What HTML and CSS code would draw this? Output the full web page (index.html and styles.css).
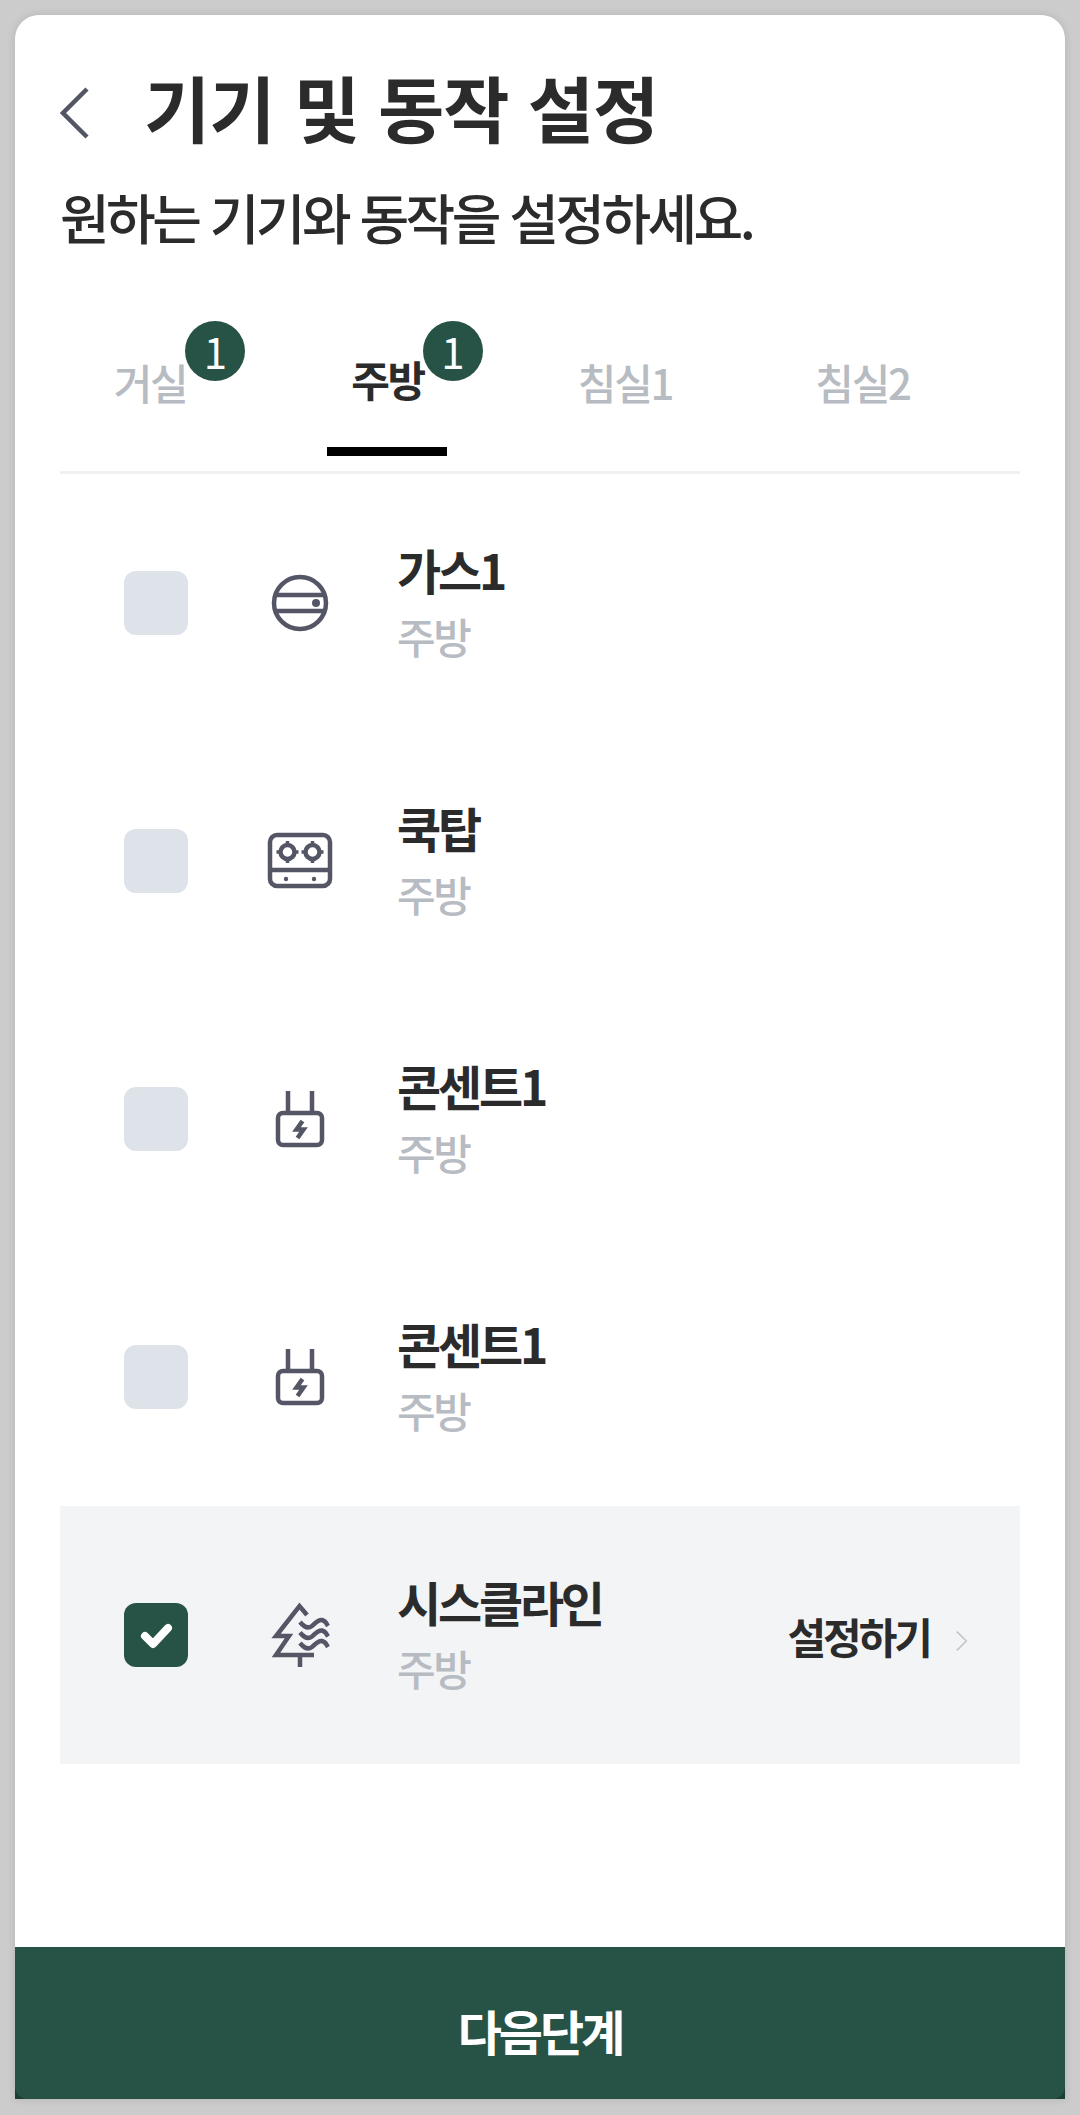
FILE: index.html
```html
<!DOCTYPE html>
<html lang="ko">
<head>
<meta charset="utf-8">
<title>기기 및 동작 설정</title>
<link rel="stylesheet" href="styles.css">
</head>
<body>
<main class="card">
  <header class="head">
    <div class="title-row">
      <svg class="back" viewBox="0 0 30 52"><path d="M27 2 3 26l24 24"/></svg>
      <h1 class="title">기기 및 동작 설정</h1>
    </div>
    <p class="subtitle">원하는 기기와 동작을 설정하세요.</p>
  </header>
  <nav class="tabs">
    <div class="tab"><span class="tab-label">거실<span class="badge">1</span></span></div>
    <div class="tab active"><span class="tab-label">주방<span class="badge">1</span></span></div>
    <div class="tab"><span class="tab-label">침실1</span></div>
    <div class="tab"><span class="tab-label">침실2</span></div>
  </nav>
  <section class="list">
    <div class="row">
      <span class="check"></span>
      <svg class="icon" viewBox="0 0 72 72"><circle cx="36" cy="36" r="26"/><path d="M11 28h50M11 44h50"/><circle class="fill" cx="52" cy="36" r="4"/></svg>
      <div class="info"><div class="name">가스1</div><div class="place">주방</div></div>
    </div>
    <div class="row">
      <span class="check"></span>
      <svg class="icon" viewBox="0 0 72 72"><rect x="6" y="10" width="60" height="51" rx="7"/><path d="M6 45h60"/><circle cx="23.500" cy="27" r="7"/><circle cx="48.500" cy="27" r="7"/><path d="M23.500 16v4M23.500 34v4M12.500 27h4M30.500 27h4M48.500 16v4M48.500 34v4M37.500 27h4M55.500 27h4" class="thin"/><circle class="fill" cx="22" cy="54" r="2.200"/><circle class="fill" cx="50" cy="54" r="2.200"/></svg>
      <div class="info"><div class="name">쿡탑</div><div class="place">주방</div></div>
    </div>
    <div class="row">
      <span class="check"></span>
      <svg class="icon" viewBox="0 0 72 72"><path d="M24 8v22M48 8v22"/><rect x="14" y="30" width="44" height="32" rx="5"/><path class="bolt" d="M38.500 38 32.500 46.500h7L33.500 55"/></svg>
      <div class="info"><div class="name">콘센트1</div><div class="place">주방</div></div>
    </div>
    <div class="row">
      <span class="check"></span>
      <svg class="icon" viewBox="0 0 72 72"><path d="M24 8v22M48 8v22"/><rect x="14" y="30" width="44" height="32" rx="5"/><path class="bolt" d="M38.500 38 32.500 46.500h7L33.500 55"/></svg>
      <div class="info"><div class="name">콘센트1</div><div class="place">주방</div></div>
    </div>
    <div class="row selected">
      <span class="check on"><svg class="tick" viewBox="0 0 64 64"><path d="M21 33l8 8 15-16"/></svg></span>
      <svg class="icon" viewBox="0 0 72 72"><path d="M43 16 35.500 7 12 37h13L12 56h38M36 56v12"/><path d="M36 23c4 5 8 7 12 4s6-7 10-6 4 3 6 6M36 33.500c4 5 8 7 12 4s6-7 10-6 4 3 6 6M36 44c4 5 8 7 12 4s6-7 10-6 4 3 6 6"/></svg>
      <div class="info"><div class="name">시스클라인</div><div class="place">주방</div></div>
      <div class="action"><span>설정하기</span><svg class="chev" viewBox="0 0 14 24"><path d="M1 1l11 11L1 23"/></svg></div>
    </div>
  </section>
  <button class="next">다음단계</button>
</main>
</body>
</html>
```
FILE: styles.css
```css
* { box-sizing: border-box; }
html, body { margin: 0; height: 100%; }
body {
  background: #cccccc;
  padding: 15px;
  font-family: "Noto Sans CJK KR", "Noto Sans", sans-serif;
  color: #2b2b2b;
}
.card {
  height: 2084px;
  background: #fff;
  border-radius: 24px 24px 0 0;
  box-shadow: 0 0 8px rgba(0,0,0,.12);
  display: flex;
  flex-direction: column;
}
.head { padding: 46px 45px 0; height: 275px; }
.title-row { display: flex; align-items: center; height: 90px; }
.back { width: 30px; height: 52px; margin-right: 54px; margin-top: 13px; fill: none; stroke: #545665; stroke-width: 4.5; flex: none; }
.title { margin: 0; font-size: 72px; font-weight: 700; line-height: 90px; letter-spacing: -1px; white-space: nowrap; }
.subtitle { margin: 30px 0 0; font-size: 54px; font-weight: 500; line-height: 72px; letter-spacing: -3.6px; white-space: nowrap; }
.tabs { margin: 0 45px; height: 184px; display: grid; grid-template-columns: repeat(4, 180px); column-gap: 57.5px; border-bottom: 3px solid #f0f1f2; }
.tab { position: relative; display: flex; justify-content: center; padding-top: 62px; color: #b7bbc2; font-size: 42px; font-weight: 500; letter-spacing: -2.3px; }
.tab-label { position: relative; line-height: 60px; height: 60px; }
.tab.active { color: #2b2b2b; font-weight: 700; padding-top: 59px; }
.tab.active::after { content: ""; position: absolute; left: 50%; margin-left: -61px; bottom: 15px; width: 120px; height: 9px; background: #000; }
.badge { position: absolute; left: 100%; top: -31px; margin-left: -1px; width: 60px; height: 60px; border-radius: 50%; background: #275246; color: #fff; font-size: 42px; font-weight: 400; letter-spacing: 0; line-height: 60px; text-align: center; }
.active .badge { top: -28px; }
.list { margin: 0 45px; flex: 1; display: flex; flex-direction: column; }
.row { height: 258px; flex: none; display: flex; align-items: center; padding-left: 64px; padding-right: 52px; }
.selected { background: #f3f4f6; }
.check { width: 64px; height: 64px; border-radius: 12px; background: #dee2e9; flex: none; display: block; }
.check.on { background: #275246; }
.tick { display: block; width: 64px; height: 64px; fill: none; stroke: #fff; stroke-width: 8; stroke-linecap: round; stroke-linejoin: round; }
.icon { width: 72px; height: 72px; margin-left: 76px; margin-right: 61px; flex: none; fill: none; stroke: #545665; stroke-width: 4.5; }
.icon .fill { fill: #545665; stroke: none; }
.icon .thin { stroke-width: 3.5; }
.icon .bolt { stroke-width: 4.5; }
.info { display: flex; flex-direction: column; margin-top: -3px; }
.name { font-size: 48px; font-weight: 700; line-height: 64px; letter-spacing: -3.2px; }
.place { font-size: 42px; font-weight: 500; line-height: 60px; margin-top: 5px; color: #b7bbc2; letter-spacing: -2.5px; }
.action { margin-left: auto; display: flex; align-items: center; gap: 26px; font-size: 42px; font-weight: 700; letter-spacing: -3px; }
.chev { width: 12px; height: 22px; fill: none; stroke: #c3c6cc; stroke-width: 2; margin-top: 12px; flex: none; }
.next { position: relative; height: 152px; flex: none; border: 0; background: #275246; color: #fff; font-family: inherit; font-size: 48px; font-weight: 700; letter-spacing: -3px; padding: 13px 0 0; }
.next::before, .next::after { content: ""; position: absolute; bottom: 0; width: 12px; height: 12px; }
.next::before { left: 0; background: radial-gradient(circle at 100% 0, transparent 11.500px, #1c3f35 12px); }
.next::after { right: 0; background: radial-gradient(circle at 0 0, transparent 11.500px, #1c3f35 12px); }
```
